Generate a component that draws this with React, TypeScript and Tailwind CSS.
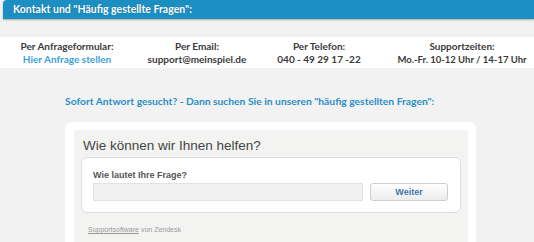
export default function App() {
  return (
    <div className="w-[534px] h-[242px] overflow-hidden bg-[#f2f2f2] font-['Lato',sans-serif]">
      {/* Titelleiste */}
      <div className="ml-[3px] h-[19px] rounded-tl-[4px] bg-[#1b8ec2] pl-[10px] flex items-center shadow-[0_1px_2px_rgba(0,0,0,0.3)]">
        <span className="text-[10.5px] font-bold text-white [text-shadow:0_0_1px_rgba(0,0,0,0.3)]">
          Kontakt und "Häufig gestellte Fragen":
        </span>
      </div>

      {/* Kontaktdaten */}
      <div className="mt-[18px] h-[31px] bg-white grid grid-cols-[134px_126px_118px_156px] text-[10px] font-bold text-[#3a3a3a] leading-[13px] pt-[3px]">
        <div className="text-center">
          <div>Per Anfrageformular:</div>
          <div className="text-[#3e9fd6]">Hier Anfrage stellen</div>
        </div>
        <div className="text-center">
          <div>Per Email:</div>
          <div>support@meinspiel.de</div>
        </div>
        <div className="text-center">
          <div>Per Telefon:</div>
          <div>040 - 49 29 17 -22</div>
        </div>
        <div className="text-center pl-3 text-[9.5px]">
          <div className="text-[10px]">Supportzeiten:</div>
          <div>Mo.-Fr. 10-12 Uhr / 14-17 Uhr</div>
        </div>
      </div>

      <p className="mt-[26px] pl-[65px] text-[10.3px] font-bold text-[#2a8fc6] leading-[14px]">
        Sofort Antwort gesucht? - Dann suchen Sie in unseren "häufig gestellten Fragen":
      </p>

      {/* Zendesk Widget */}
      <div className="mt-[14px] ml-[65px] w-[411px] h-[140px] rounded-[7px] bg-white pt-[8px] pl-[9px] pr-[8px]">
        <div className="h-full bg-[#f3f3f2] px-[7px] pt-[8px] font-['Liberation_Sans',Arial,sans-serif]">
          <h2 className="text-[13.5px] leading-[16px] text-[#454545] pl-[2px]">Wie können wir Ihnen helfen?</h2>
          <div className="mt-[3px] h-[56px] rounded-[6px] border border-[#dedede] bg-white px-[11px] pt-[12px]">
            <div className="text-[9px] font-bold leading-[11px] text-[#555]">Wie lautet Ihre Frage?</div>
            <div className="mt-[2px] flex gap-[7px]">
              <div className="w-[270px] h-[18px] border border-[#e2e2e2] bg-[#f1f1f1]" />
              <button className="w-[78px] h-[18px] rounded-[3px] border border-[#cfcfcf] bg-linear-to-b from-white to-[#ececec] text-[9px] font-bold leading-[16px] text-[#4477ad]">
                Weiter
              </button>
            </div>
          </div>
          <div className="mt-[11px] pl-[7px] text-[7px] leading-[12px] text-[#9a9a9a]">
            <span className="underline">Supportsoftware</span> von Zendesk
          </div>
        </div>
      </div>
    </div>
  );
}
